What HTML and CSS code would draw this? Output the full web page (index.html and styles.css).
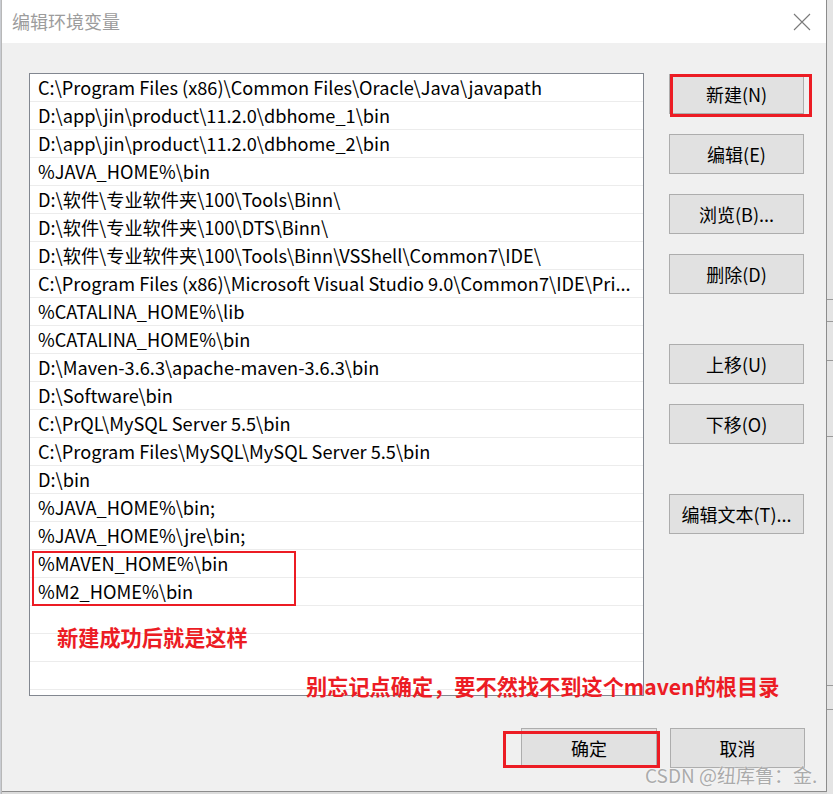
FILE: index.html
```html
<!DOCTYPE html>
<html>
<head>
  <title>编辑环境变量</title>
  <link rel="stylesheet" href="styles.css">
</head>
<body>
  <div class="screen">
    <div class="edge-left"></div>
    <div class="dialog">
      <div class="titlebar">
        <span class="title">编辑环境变量</span>
        <svg class="close" width="18" height="18" viewBox="0 0 18 18">
          <path d="M1 1 L17 17 M17 1 L1 17" stroke="#7a7a7a" stroke-width="1.1" fill="none"/>
        </svg>
      </div>
      <div class="content">
        <div class="main">
          <div class="list">
            <div class="row">C:\Program Files (x86)\Common Files\Oracle\Java\javapath</div>
            <div class="row">D:\app\jin\product\11.2.0\dbhome_1\bin</div>
            <div class="row">D:\app\jin\product\11.2.0\dbhome_2\bin</div>
            <div class="row">%JAVA_HOME%\bin</div>
            <div class="row">D:\软件\专业软件夹\100\Tools\Binn\</div>
            <div class="row">D:\软件\专业软件夹\100\DTS\Binn\</div>
            <div class="row">D:\软件\专业软件夹\100\Tools\Binn\VSShell\Common7\IDE\</div>
            <div class="row">C:\Program Files (x86)\Microsoft Visual Studio 9.0\Common7\IDE\Pri...</div>
            <div class="row">%CATALINA_HOME%\lib</div>
            <div class="row">%CATALINA_HOME%\bin</div>
            <div class="row">D:\Maven-3.6.3\apache-maven-3.6.3\bin</div>
            <div class="row">D:\Software\bin</div>
            <div class="row">C:\PrQL\MySQL Server 5.5\bin</div>
            <div class="row">C:\Program Files\MySQL\MySQL Server 5.5\bin</div>
            <div class="row">D:\bin</div>
            <div class="row">%JAVA_HOME%\bin;</div>
            <div class="row">%JAVA_HOME%\jre\bin;</div>
            <div class="row">%MAVEN_HOME%\bin</div>
            <div class="row">%M2_HOME%\bin</div>
            <div class="row"></div>
            <div class="row"></div>
            <div class="row"></div>
          </div>
          <div class="side">
            <button class="btn">新建(N)</button>
            <button class="btn">编辑(E)</button>
            <button class="btn">浏览(B)...</button>
            <button class="btn">删除(D)</button>
            <button class="btn spaced">上移(U)</button>
            <button class="btn">下移(O)</button>
            <button class="btn spaced">编辑文本(T)...</button>
          </div>
        </div>
        <div class="footer">
          <button class="btn wide">确定</button>
          <button class="btn">取消</button>
        </div>
      </div>

      <!-- red annotations drawn over the screenshot -->
      <div class="mark mark-new"></div>
      <div class="mark mark-rows"></div>
      <div class="mark mark-ok"></div>
      <div class="note note-1">新建成功后就是这样</div>
      <div class="note note-2">别忘记点确定，要不然找不到这个maven的根目录</div>
      <div class="watermark">CSDN @纽库鲁：金.</div>
    </div>
    <div class="edge-right">
      <div class="line" style="top:299px"></div>
      <div class="line" style="top:321px"></div>
      <div class="line" style="top:360px"></div>
      <div class="line" style="top:436px"></div>
      <div class="line" style="top:685px"></div>
      <div class="line" style="top:709px"></div>
    </div>
  </div>
</body>
</html>
```

FILE: styles.css
```css
* {
  box-sizing: border-box;
}
body {
  margin: 0;
  overflow: hidden;
  background: #dcdcdc;
  font-family: "Noto Sans CJK SC", "Noto Sans", sans-serif;
}
.screen {
  display: flex;
  width: 833px;
  height: 794px;
}
.edge-left {
  width: 2px;
  border-right: 1px solid #b8b8b8;
  background: #c9ccd2;
}
.dialog {
  position: relative;
  width: 825px;
  height: 792px;
  border-right: 1px solid #8c8c8c;
  border-bottom: 1px solid #8c8c8c;
  background: #f0f0f0;
}
.titlebar {
  height: 43px;
  background: #fff;
  display: flex;
  align-items: center;
  justify-content: space-between;
  padding: 0 15px 2px 10px;
}
.title {
  font-size: 18px;
  color: #9c9c9c;
}
.close {
  margin-top: 2px;
}
.content {
  padding: 30px 21px 0 27px;
}
.main {
  display: flex;
  gap: 25px;
}
.list {
  width: 615px;
  height: 623px;
  border: 1px solid #828790;
  background: #fff;
  overflow: hidden;
}
.row {
  height: 28px;
  border-bottom: 1px solid #ececec;
  padding-left: 8px;
  font-size: 18.2px;
  line-height: 27px;
  color: #000;
  white-space: nowrap;
  overflow: hidden;
}
.side {
  display: flex;
  flex-direction: column;
  gap: 20px;
  padding-top: 1px;
}
.btn {
  width: 135px;
  height: 40px;
  border: 1px solid #adadad;
  background: #e1e1e1;
  font-family: "Noto Sans CJK SC", "Noto Sans", sans-serif;
  font-size: 18px;
  color: #000;
  padding: 0;
}
.btn.spaced {
  margin-top: 30px;
}
.btn.wide {
  width: 136px;
}
.footer {
  display: flex;
  justify-content: flex-end;
  gap: 13px;
  margin-top: 32px;
}
.mark {
  position: absolute;
  border: 3px solid #ec1c24;
}
.mark-new {
  left: 668px;
  top: 74px;
  width: 142px;
  height: 43px;
}
.mark-rows {
  left: 30px;
  top: 551px;
  width: 264px;
  height: 55px;
  border-width: 2px;
}
.mark-ok {
  left: 501px;
  top: 731px;
  width: 157px;
  height: 37px;
}
.note {
  position: absolute;
  font-size: 21.2px;
  font-weight: 700;
  line-height: 24px;
  color: #ec1c24;
  white-space: nowrap;
}
.note-1 {
  left: 55px;
  top: 625px;
}
.note-2 {
  left: 304px;
  top: 674px;
}
.watermark {
  position: absolute;
  left: 643px;
  top: 763px;
  font-size: 19px;
  line-height: 24px;
  color: #ababab;
  text-shadow: 0 0 2px #fff;
  white-space: nowrap;
}
.edge-right {
  position: relative;
  flex: 1;
  background: #e4e4e4;
}
.edge-right .line {
  position: absolute;
  left: 0;
  right: 0;
  height: 1px;
  background: #9a9a9a;
}
```
